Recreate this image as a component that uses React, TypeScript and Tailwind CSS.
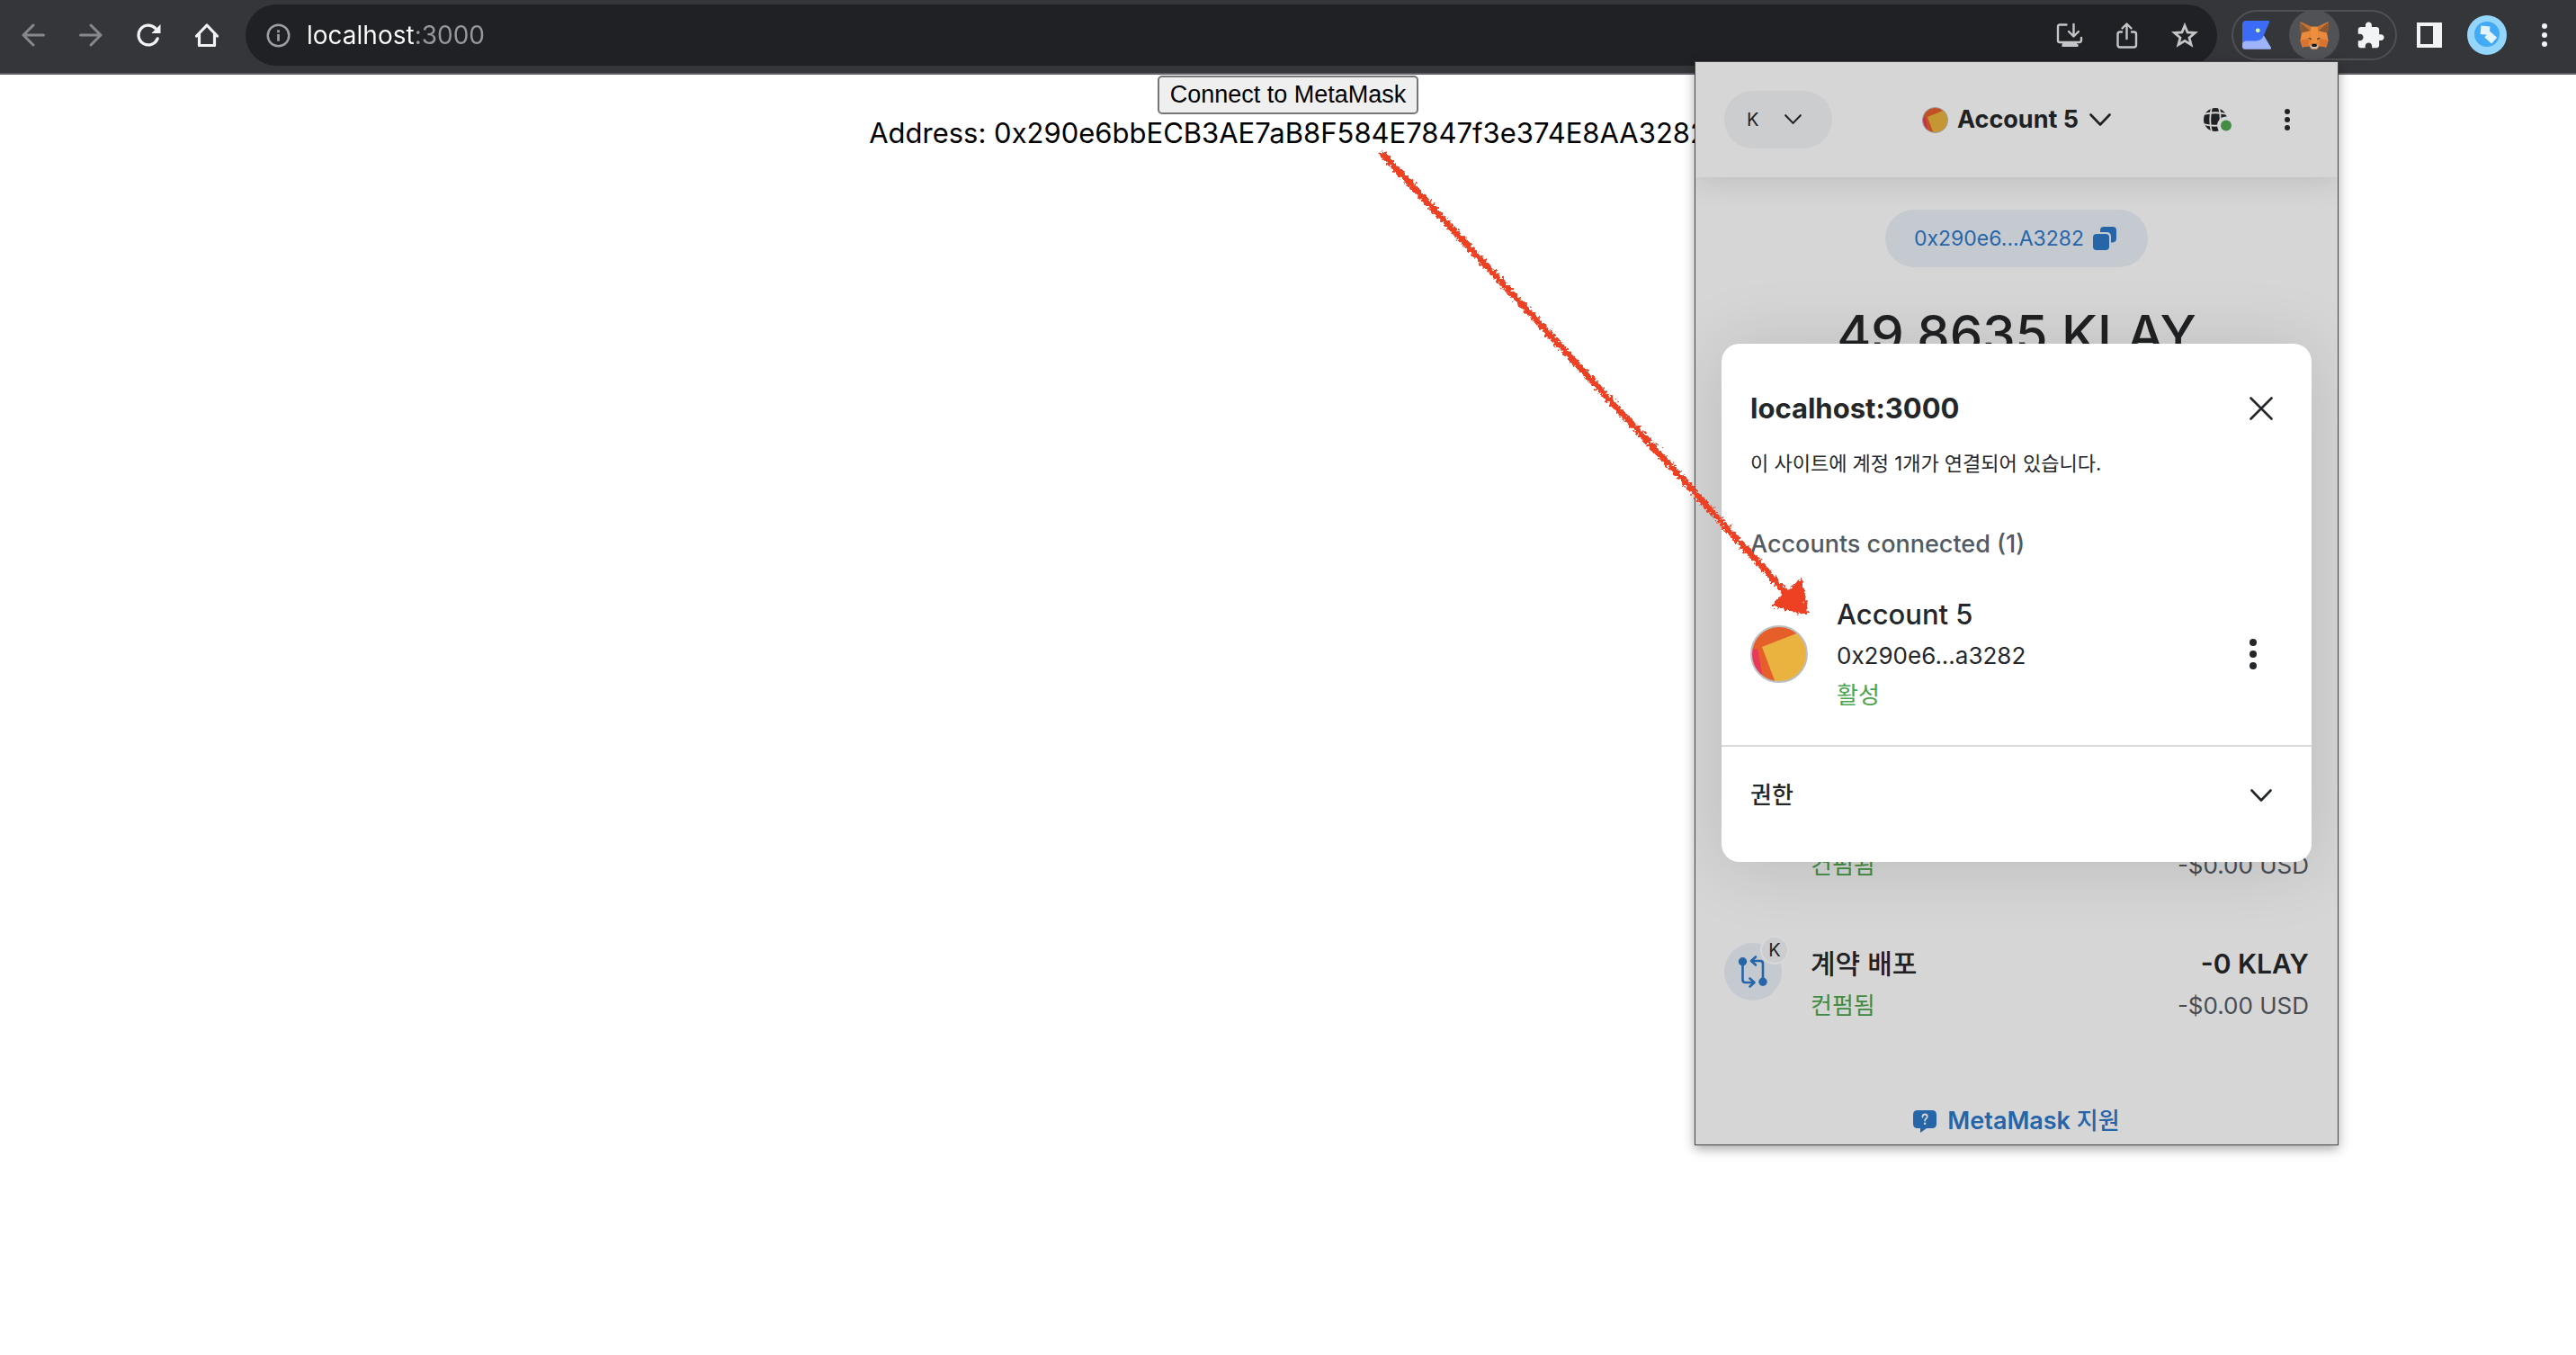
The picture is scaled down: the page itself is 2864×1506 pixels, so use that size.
import type { ReactNode } from 'react';

type IconProps = { className?: string };

const stroke = {
  fill: 'none',
  stroke: 'currentColor',
  strokeLinecap: 'round' as const,
  strokeLinejoin: 'round' as const,
};

function BackIcon({ className }: IconProps) {
  return (
    <svg viewBox="0 0 26 26" className={className} {...stroke} strokeWidth={3}>
      <path d="M24.500 13H2M13 2 2 13l11 11" />
    </svg>
  );
}

function ReloadIcon() {
  return (
    <svg viewBox="0 0 28 28" className="size-[27px]" {...stroke} strokeWidth={3.4}>
      <path d="M24 17.500A11.300 11.300 0 1 1 21.300 5.400" />
      <path d="M27.500 1v10.500H17z" fill="currentColor" stroke="none" />
    </svg>
  );
}

function HomeIcon() {
  return (
    <svg viewBox="0 0 26 26" className="size-[26px]" {...stroke} strokeWidth={3.2}>
      <path d="M1.500 14 13 2l11.500 12M4.500 12v12.500h17V12" />
    </svg>
  );
}

function InfoIcon() {
  return (
    <svg viewBox="0 0 28 28" className="size-[27px] text-[#9aa0a6]" fill="none" stroke="currentColor" strokeWidth={2.6}>
      <circle cx="14" cy="14" r="12.200" />
      <path d="M14 12.500v8M14 7.500v3" strokeWidth={2.8} />
    </svg>
  );
}

function InstallIcon() {
  return (
    <svg viewBox="0 0 30 30" className="size-[30px]" {...stroke} strokeWidth={2.4}>
      <path d="M11.500 3.500H4q-2 0-2 2v15.500q0 2 2 2h21.500q2.500 0 2.500-2.500V18" />
      <path d="M19.500 3v13M14 11l5.500 5.500L25 11" />
      <path d="M7 23h16v2h1.500v3h-18v-3H7z" fill="currentColor" stroke="none" />
    </svg>
  );
}

function ShareIcon() {
  return (
    <svg viewBox="0 0 30 30" className="size-[30px]" {...stroke} strokeWidth={2.4}>
      <path d="M9 11.500H7q-2.500 0-2.500 2.500v12q0 2.500 2.500 2.500h15.500q2.500 0 2.500-2.500V14q0-2.500-2.500-2.500H20" />
      <path d="M14.500 19V3M9.500 7.500l5-5 5 5" />
    </svg>
  );
}

function StarIcon() {
  return (
    <svg viewBox="0 0 30 30" className="size-[30px]" fill="none" stroke="currentColor" strokeWidth={2.8}>
      <path d="M15 4.500 18.100 12l8.300.5-6.400 5.400 2.100 7.800L15 21.400l-7.100 4.300 2.100-7.800-6.400-5.400 8.300-.5z" />
    </svg>
  );
}

function BlueExtensionIcon() {
  return (
    <svg viewBox="0 0 32 32" className="size-8">
      <path d="M24 16.500 32 30q.5 1.700-1.500 1.700H3q-3 0-3-3V23z" fill="#9fb3fb" />
      <path d="M4 0h25q1.700 0 1 2l-6 14q-2.500 6.500-9 6.500H4q-3 0-4 3V4q0-4 4-4z" fill="#3c6cf6" />
      <circle cx="17.300" cy="10.800" r="2.400" fill="#d9f79a" />
    </svg>
  );
}

function FoxIcon() {
  return (
    <svg viewBox="0 0 94 91" className="h-[31px] w-8">
      <path d="M2 1l35 16h20L92 1l2 20-6 17 5 24-7 22-22-4-8 10H38l-8-10-22 4-7-22 5-24L0 21z" fill="#e58436" />
      <path d="M2 3l33 27L4 37 0 21zM92 3 59 30l31 7 4-16z" fill="#8a5832" />
      <path d="M2 1l35 16-3 13zM92 1 57 17l3 13z" fill="#c9722f" />
      <path d="M6 38l29-8-6 22-26 10zM88 38l-29-8 6 22 26 10z" fill="#ea8a3d" />
      <path d="M1 62l28-6-1 24-20 4zM93 62l-28-6 1 24 20 4z" fill="#d8742f" />
      <path d="M37 17h20l3 35-4 20H38l-4-20z" fill="#ec903f" />
      <path d="M26 53l12 1-2 6zM68 53l-12 1 2 6z" fill="#3a3d46" />
      <path d="M33 79l7-5h14l7 5-7 10H40z" fill="#cfc0b5" />
      <path d="M40 73h14l2 6-4 3H42l-4-3z" fill="#15181c" />
    </svg>
  );
}

function PuzzleIcon() {
  return (
    <svg viewBox="0 0 24 24" className="size-[33px] text-[#f1f3f4]" fill="currentColor">
      <path d="M20.500 11H19V7c0-1.100-.9-2-2-2h-4V3.500C13 2.120 11.880 1 10.500 1S8 2.120 8 3.500V5H4c-1.100 0-1.990.9-1.990 2v3.800H3.500c1.490 0 2.700 1.210 2.700 2.700s-1.210 2.700-2.700 2.700H2V20c0 1.100.9 2 2 2h3.800v-1.500c0-1.490 1.210-2.700 2.700-2.700 1.490 0 2.700 1.210 2.700 2.700V22H17c1.100 0 2-.9 2-2v-4h1.500c1.380 0 2.500-1.120 2.500-2.500S21.880 11 20.500 11z" />
    </svg>
  );
}

function SidePanelIcon() {
  return (
    <svg viewBox="0 0 28 28" className="size-7" fill="#f1f3f4">
      <path fillRule="evenodd" d="M0 0h28v28H0zM4 4v20h14V4z" />
    </svg>
  );
}

function ProfileIcon() {
  return (
    <svg viewBox="0 0 44 44" className="size-11">
      <circle cx="22" cy="22" r="22" fill="#94d5fc" />
      <circle cx="22" cy="21" r="14" fill="#44aaf6" />
      <rect x="15" y="12" width="10" height="9.500" fill="#e4f4fe" transform="rotate(5 20 17)" />
      <rect x="21" y="20" width="10.500" height="9" fill="#e4f4fe" transform="rotate(42 26 24.500)" />
    </svg>
  );
}

function DotsIcon({ className, r, gap }: IconProps & { r: number; gap: number }) {
  const w = r * 2;
  const h = gap * 2 + w;
  return (
    <svg width={w} height={h} viewBox={`0 0 ${w} ${h}`} className={className} fill="currentColor">
      {[0, 1, 2].map((i) => (
        <circle key={i} cx={r} cy={r + i * gap} r={r} />
      ))}
    </svg>
  );
}

function Chevron({ className }: IconProps) {
  return (
    <svg viewBox="0 0 24 14" className={className} {...stroke} strokeWidth={2.6}>
      <path d="M1.500 1.500 12 12.500l10.500-11" />
    </svg>
  );
}

function CloseIcon() {
  return (
    <svg viewBox="0 0 26 26" className="size-[26px]" {...stroke} strokeWidth={2.6}>
      <path d="M1.500 1.500l23 23M24.500 1.500l-23 23" />
    </svg>
  );
}

function Jazzicon({ className, id }: { className?: string; id: string }) {
  return (
    <svg viewBox="0 0 64 64" className={className}>
      <clipPath id={id}>
        <circle cx="32" cy="32" r="31" />
      </clipPath>
      <g clipPath={`url(#${id})`}>
        <path d="M0 0h64v64H0z" fill="#e65f2b" />
        <path d="M0 27l8-1 6 32-14 6z" fill="#e83a58" />
        <path d="M64 4 13 24l15 40h36z" fill="#eab23e" />
      </g>
      <circle cx="32" cy="32" r="31" fill="none" stroke="#bbc0c5" strokeWidth="2" />
    </svg>
  );
}

function GlobeIcon() {
  return (
    <svg viewBox="0 0 34 28" className="h-7 w-[34px]">
      <circle cx="13" cy="14" r="13" fill="#1f2123" />
      <g fill="none" stroke="#d6d6d6" strokeWidth="1.800">
        <path d="M0 8q13-3.500 26 0M0 19q13 3.500 26 0" />
        <path d="M9 0q-3.500 14 0 28M17 0q3.500 14 0 28" />
      </g>
      <circle cx="25" cy="20.500" r="10" fill="#d6d6d6" />
      <circle cx="25" cy="20.500" r="6" fill="#458c45" />
    </svg>
  );
}

function CopyIcon() {
  return (
    <svg viewBox="0 0 26 26" className="size-[26px]" fill="currentColor">
      <path d="M12 0h10q4 0 4 4v9q0 4-4 4.500h-2V11q0-5-5-5H8V4q0-4 4-4z" />
      <rect y="8" width="18" height="18" rx="4" />
    </svg>
  );
}

function ContractIcon() {
  return (
    <svg viewBox="0 0 64 64" className="size-16 text-[#2765a9]" {...stroke} strokeWidth={2.6}>
      <circle cx="32" cy="32" r="32" fill="#c5cad1" stroke="none" />
      <g fill="currentColor" stroke="none">
        <circle cx="20.500" cy="20.700" r="4.700" />
        <circle cx="43" cy="43.300" r="4.700" />
      </g>
      <path d="M20.500 22v19q0 3 3 3h9.500M28.500 39.500l5 4.500-5 4.500" />
      <path d="M43 42V23q0-3-3-3h-9.500M35 15.500 30 20l5 4.500" />
    </svg>
  );
}

function SupportIcon() {
  return (
    <svg viewBox="0 0 26 26" className="size-[26px]">
      <path d="M5 1h16q5 0 5 5v10q0 5-5 5h-6l-7 5v-5H5q-5 0-5-5V6q0-5 5-5z" fill="currentColor" />
      <path d="M10.500 8.500q0-3 2.600-3t2.600 2.500q0 1.500-1.300 2.200-1.300.8-1.300 2.300" fill="none" stroke="#d6d6d6" strokeWidth="1.800" strokeLinecap="round" />
      <circle cx="13.100" cy="15.800" r="1.300" fill="#d6d6d6" />
    </svg>
  );
}

function IconButton({ label, children, className = '' }: { label: string; children: ReactNode; className?: string }) {
  return (
    <button type="button" aria-label={label} className={`flex shrink-0 items-center justify-center ${className}`}>
      {children}
    </button>
  );
}

function BrowserToolbar() {
  return (
    <header className="flex h-[83px] items-center border-b-2 border-[#5f5e64] bg-[#35363a] pr-8 pb-[3px] pl-6 text-[#f1f3f4]">
      <nav aria-label="Navigation" className="mr-[30px] flex items-center gap-[38px]">
        <IconButton label="Back" className="text-[#87888b]">
          <BackIcon className="size-[26px]" />
        </IconButton>
        <IconButton label="Forward" className="text-[#87888b]">
          <BackIcon className="size-[26px] rotate-180" />
        </IconButton>
        <IconButton label="Reload">
          <ReloadIcon />
        </IconButton>
        <IconButton label="Home">
          <HomeIcon />
        </IconButton>
      </nav>
      <div className="flex h-[68px] min-w-0 flex-1 items-center rounded-full bg-[#202124] pr-[21px] pl-[23px]">
        <InfoIcon />
        <input
          type="text"
          aria-label="Address and search bar"
          defaultValue="localhost:3000"
          className="ml-[18px] min-w-0 flex-1 bg-[linear-gradient(90deg,#ffffff_120px,#96989b_120px)] bg-clip-text font-['Inter',sans-serif] text-[28px] leading-10 text-transparent outline-none"
        />
        <div className="flex gap-[34px] text-[#c4c5c7]">
          <IconButton label="Install app">
            <InstallIcon />
          </IconButton>
          <IconButton label="Share">
            <ShareIcon />
          </IconButton>
          <IconButton label="Bookmark">
            <StarIcon />
          </IconButton>
        </div>
      </div>
      <div className="ml-4 flex h-14 w-[184px] items-center rounded-full border-2 border-[#4f5054] pl-[10px]">
        <IconButton label="Wallet extension">
          <BlueExtensionIcon />
        </IconButton>
        <IconButton label="MetaMask" className="ml-5 size-14 rounded-full bg-[#515256]">
          <FoxIcon />
        </IconButton>
        <IconButton label="Extensions" className="ml-[18px]">
          <PuzzleIcon />
        </IconButton>
      </div>
      <IconButton label="Side panel" className="ml-[22px]">
        <SidePanelIcon />
      </IconButton>
      <IconButton label="Profile" className="ml-7">
        <ProfileIcon />
      </IconButton>
      <IconButton label="Menu" className="ml-[39px]">
        <DotsIcon r={3} gap={10} />
      </IconButton>
    </header>
  );
}

function PopupHeader() {
  return (
    <div className="grid h-32 grid-cols-[1fr_auto_1fr] items-center bg-[#d6d6d6] px-8 shadow-[0_4px_32px_rgba(0,0,0,0.12)]">
      <button type="button" aria-label="Network" className="flex h-16 w-[120px] items-center justify-between rounded-full bg-[#cccdcf] pr-[34px] pl-[25px] text-xl">
        K
        <Chevron className="w-[19px]" />
      </button>
      <button type="button" className="flex items-center text-[27px] leading-10 font-bold">
        <Jazzicon id="header-avatar" className="mr-[10px] size-[29px] brightness-[0.84]" />
        Account 5
        <Chevron className="ml-3 w-6" />
      </button>
      <div className="mr-[21px] flex items-center justify-end gap-14">
        <IconButton label="Connected sites">
          <GlobeIcon />
        </IconButton>
        <IconButton label="Account options">
          <DotsIcon r={3} gap={9} />
        </IconButton>
      </div>
    </div>
  );
}

type Activity = { title?: string; amount?: string; network?: string; status: string; fiat: string };

const activities: Activity[] = [
  { status: '컨펌됨', fiat: '-$0.00 USD' },
  { title: '계약 배포', amount: '-0 KLAY', network: 'K', status: '컨펌됨', fiat: '-$0.00 USD' },
];

function ActivityRow({ title, amount, network, status, fiat }: Activity) {
  return (
    <li className="flex items-start gap-8 px-8 pt-8 pb-[30px]">
      <div className="relative">
        <ContractIcon />
        {network && (
          <span className="absolute -top-2 -right-2 flex size-8 items-center justify-center rounded-full border-2 border-[#d9d9d9] bg-[#cccdcf] text-xl">
            {network}
          </span>
        )}
      </div>
      <div className="flex-1">
        <p className="h-[46px] text-3xl/[46px] font-medium">{title}</p>
        <p className="text-[26px] leading-[48px] text-[#3f8c41]">{status}</p>
      </div>
      <div className="text-right">
        <p className="h-[46px] text-3xl/[46px] font-semibold">{amount}</p>
        <p className="text-[26px] leading-[48px] text-[#474d54]">{fiat}</p>
      </div>
    </li>
  );
}

function ConnectedSitesDialog() {
  return (
    <div
      role="dialog"
      aria-labelledby="dialog-title"
      className="absolute inset-x-[29px] top-[313px] rounded-[20px] bg-white text-[#24272a] shadow-[0_4px_80px_rgba(0,0,0,0.13)]"
    >
      <div className="border-b-2 border-[#d9dadd] pt-[50px] pr-[43px] pb-[34px] pl-8">
        <div className="flex items-center justify-between">
          <h2 id="dialog-title" className="text-[31px] leading-[44px] font-bold">
            localhost:3000
          </h2>
          <IconButton label="Close">
            <CloseIcon />
          </IconButton>
        </div>
        <p className="mt-[21px] text-[22px] leading-9">이 사이트에 계정 1개가 연결되어 있습니다.</p>
        <h3 className="mt-[52px] text-[27px] leading-10 font-medium text-[#535a61]">Accounts connected (1)</h3>
        <div className="mt-[35px] flex items-center">
          <Jazzicon id="dialog-avatar" className="size-16" />
          <div className="ml-8 flex-1">
            <p className="text-[31px] leading-[46px] font-medium">Account 5</p>
            <p className="text-[26px] leading-[46px]">0x290e6...a3282</p>
            <p className="text-[26px] leading-[42px] text-[#4aa54e]">활성</p>
          </div>
          <IconButton label="Account menu" className="mr-[18px]">
            <DotsIcon r={4} gap={13} />
          </IconButton>
        </div>
      </div>
      <button type="button" className="flex w-full items-center justify-between pt-8 pr-11 pb-[52px] pl-8 text-[26px] leading-[44px] font-medium">
        권한
        <Chevron className="w-6" />
      </button>
    </div>
  );
}

function MetaMaskPopup() {
  return (
    <aside
      aria-label="MetaMask"
      className="absolute top-[68px] right-[264px] w-[716px] overflow-clip border border-[#444444] bg-[#d6d6d6] font-['Inter','Noto_Sans_CJK_KR',sans-serif] text-[#1f2123] shadow-[0_4px_12px_rgba(0,0,0,0.35)]"
    >
      <PopupHeader />
      <div className="flex flex-col items-center pt-9">
        <button type="button" className="flex h-16 items-center gap-[10px] rounded-full bg-[#c5cad1] pr-[35px] pl-8 text-[23px] text-[#2765a9]">
          0x290e6...A3282
          <CopyIcon />
        </button>
        <p className="mt-[34px] text-[58px] leading-[80px] font-medium">49.8635 KLAY</p>
      </div>
      <ul className="mt-[449px]">
        {activities.map((activity, i) => (
          <ActivityRow key={i} {...activity} />
        ))}
      </ul>
      <a href="#support" className="mt-[54px] mb-[6px] flex items-center justify-center gap-3 text-[27px] leading-10 font-semibold text-[#2765a9]">
        <SupportIcon />
        <span>
          MetaMask <span className="text-[26px] font-medium">지원</span>
        </span>
      </a>
      <ConnectedSitesDialog />
    </aside>
  );
}

function Arrow() {
  return (
    <svg viewBox="0 0 500 540" className="pointer-events-none absolute top-[156px] right-[840px] h-[540px] w-[500px]">
      <filter id="crayon" x="-5%" y="-5%" width="110%" height="110%">
        <feTurbulence type="fractalNoise" baseFrequency="0.3" numOctaves="3" seed="4" result="grain" />
        <feDisplacementMap in="SourceGraphic" in2="grain" scale="9" xChannelSelector="R" yChannelSelector="G" />
      </filter>
      <g filter="url(#crayon)" fill="#ee4023" stroke="#ee4023" strokeLinecap="round" strokeLinejoin="round">
        <path d="M14 16Q250 270 460 501" fill="none" strokeWidth="7" />
        <path d="M479 489 448 516l35 9z" strokeWidth="4" />
      </g>
    </svg>
  );
}

export default function App() {
  return (
    <div className="relative min-h-screen bg-white">
      <BrowserToolbar />
      <main className="flex flex-col items-center pt-px text-black">
        <button type="button" className="h-[43px] rounded-[5px] border-2 border-[#767676] bg-[#efefef] px-3 font-['Liberation_Sans',sans-serif] text-[27px] leading-none">
          Connect to MetaMask
        </button>
        <p className="font-['Inter',sans-serif] text-[31px] leading-[42px]">Address: 0x290e6bbECB3AE7aB8F584E7847f3e374E8AA3282</p>
      </main>
      <MetaMaskPopup />
      <Arrow />
    </div>
  );
}
